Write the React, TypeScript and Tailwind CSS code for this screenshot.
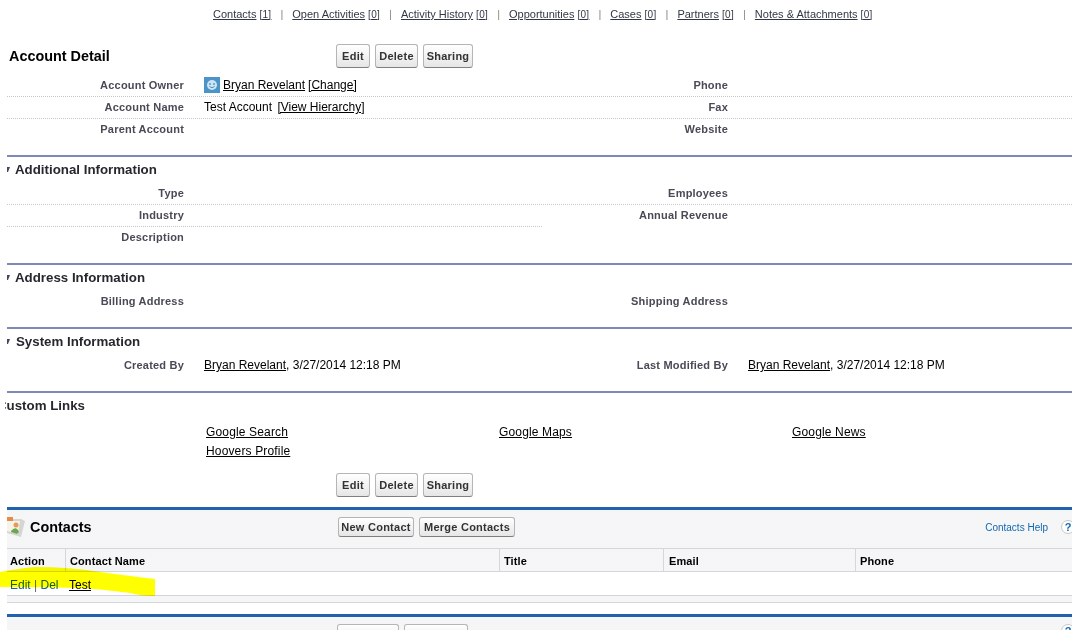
const font = { fontFamily: '"Liberation Sans", Arial, sans-serif' };

function Btn({ children, tall = true, w }: { children: string; tall?: boolean; w: string }) {
  return (
    <button
      className={`${w} ${tall ? 'h-6' : 'h-5'} rounded-[3px] border border-[#b5b5b5] border-b-[#7f7f7f] bg-gradient-to-b from-[#ffffff] to-[#e6e6e6] text-center text-[11px] leading-none font-bold tracking-[0.25px] whitespace-nowrap text-[#333333]`}
    >
      {children}
    </button>
  );
}

function Triangle() {
  return (
    <svg width="3" height="6" viewBox="0 0 3 6" className="shrink-0">
      <path d="M0 0H3L1 5H0Z" fill="#44465a" />
    </svg>
  );
}

const labelCls = 'text-right text-[11px] font-bold tracking-[0.2px] whitespace-nowrap text-[#4a4a56]';
const valueCls = 'ml-5 text-xs whitespace-nowrap text-black';

function Row({ l, v, r, rv, line = true, half = false }: { l?: string; v?: React.ReactNode; r?: string; rv?: React.ReactNode; line?: boolean; half?: boolean }) {
  return (
    <div className="relative flex h-[22px] items-center">
      <div className={`w-[177px] ${labelCls}`}>{l}</div>
      <div className={`w-[340px] ${valueCls}`}>{v}</div>
      <div className={`w-[184px] ${labelCls}`}>{r}</div>
      <div className={valueCls}>{rv}</div>
      {line && <div className="absolute -bottom-px left-0 w-full border-b border-dotted border-[#c4c8cc]" />}
      {half && <div className="absolute -bottom-px left-0 w-[535px] border-b border-dotted border-[#c4c8cc]" />}
    </div>
  );
}

function SectionHead({ title, tri = true, shift = false }: { title: string; tri?: boolean; shift?: boolean }) {
  return (
    <div className="flex h-[27px] items-center gap-[5px] border-t-2 border-[#7f89b4] pt-[1px]">
      {tri && <Triangle />}
      <h3
        className={`text-[13.3px] font-bold whitespace-nowrap text-[#27282e] ${tri ? '' : '-ml-[10px] [clip-path:inset(0_0_0_8px)]'} ${shift ? 'ml-px' : ''}`}
      >
        {title}
      </h3>
    </div>
  );
}

const A = ({ children }: { children: string }) => <a className="text-black underline">{children}</a>;

const tabs = [
  ['Contacts', '[1]'],
  ['Open Activities', '[0]'],
  ['Activity History', '[0]'],
  ['Opportunities', '[0]'],
  ['Cases', '[0]'],
  ['Partners', '[0]'],
  ['Notes & Attachments', '[0]'],
];

const dither = 'bg-[repeating-conic-gradient(#f8f5f8_0_25%,#f2f6f5_0_50%)] bg-[length:2px_2px]';

export default function App() {
  return (
    <div style={font} className="relative h-[630px] w-[1072px] overflow-hidden bg-white pl-[7px]">
      <nav className="flex h-[44px] items-start pt-[6px] pl-[206px] text-[11px] text-[#333645]">
        {tabs.map(([t, c], i) => (
          <span key={t} className="flex items-center whitespace-nowrap">
            {i > 0 && <span className="mx-[9px] text-[#8b8b7c]">|</span>}
            <a className="underline">{t}</a>
            <span className="ml-[3px] text-[10px] tracking-[0.3px] underline">{c}</span>
          </span>
        ))}
      </nav>

      <div className="flex h-[30px] items-start">
        <h2 className="mt-[2px] w-[329px] pl-[2px] text-[14.4px] font-bold text-black">Account Detail</h2>
        <div className="flex gap-[5px]">
          <Btn w="w-[34px]">Edit</Btn>
          <Btn w="w-[43px]">Delete</Btn>
          <Btn w="w-[50px]">Sharing</Btn>
        </div>
      </div>

      <Row
        l="Account Owner"
        r="Phone"
        v={
          <span className="flex items-center gap-[3px]">
            <svg width="16" height="16" viewBox="0 0 16 16" className="shrink-0">
              <rect width="16" height="16" fill="#4a94c8" />
              <circle cx="8" cy="8" r="5" fill="#cfe4f2" />
              <circle cx="6" cy="7" r="0.9" fill="#4a94c8" />
              <circle cx="10" cy="7" r="0.9" fill="#4a94c8" />
              <path d="M5.5 9.5Q8 12 10.5 9.5" stroke="#4a94c8" fill="none" />
            </svg>
            <A>Bryan Revelant</A>
            <A>[Change]</A>
          </span>
        }
      />
      <Row l="Account Name" r="Fax" v={<span>Test Account <span className="ml-[2px]"><A>[View Hierarchy]</A></span></span>} />
      <div className="h-[37px]">
        <Row l="Parent Account" r="Website" line={false} />
      </div>

      <SectionHead title="Additional Information" />
      <Row l="Type" r="Employees" />
      <Row l="Industry" r="Annual Revenue" line={false} half />
      <div className="h-[37px]">
        <Row l="Description" line={false} />
      </div>

      <SectionHead title="Address Information" />
      <div className="h-[37px]">
        <Row l="Billing Address" r="Shipping Address" line={false} />
      </div>

      <SectionHead title="System Information" shift />
      <div className="h-[37px]">
        <Row
          l="Created By"
          r="Last Modified By"
          v={<span><A>Bryan Revelant</A>, 3/27/2014 12:18 PM</span>}
          rv={<span><A>Bryan Revelant</A>, 3/27/2014 12:18 PM</span>}
          line={false}
        />
      </div>

      <SectionHead title="Custom Links" tri={false} />
      <div className="grid grid-cols-[293px_293px_auto] pt-[5px] pl-[199px] text-xs leading-[19px] tracking-[0.15px]">
        <A>Google Search</A>
        <A>Google Maps</A>
        <A>Google News</A>
        <A>Hoovers Profile</A>
      </div>

      <div className="mt-[12px] flex h-[34px] gap-[5px] pl-[329px]">
        <Btn w="w-[34px]">Edit</Btn>
        <Btn w="w-[43px]">Delete</Btn>
        <Btn w="w-[50px]">Sharing</Btn>
      </div>

      <section className={`h-[96px] border-t-[3px] border-[#1f63b0] ${dither}`}>
        <div className="flex h-[38px] items-center pb-[4px]">
          <svg width="20" height="22" viewBox="0 0 20 22" className="shrink-0">
            <path d="M0 3H14L18 5L14 21L0 17Z" fill="#d6d6d0" />
            <path d="M0 5H13L11 18L0 15Z" fill="#f5f3ea" />
            <rect x="0" y="1" width="6" height="4" fill="#ea8a48" />
            <circle cx="9" cy="9" r="2.5" fill="#e9995a" />
            <path d="M4 15Q9 9 12 16L10 18L4 16Z" fill="#6aa84f" />
          </svg>
          <h2 className="mt-[2px] ml-[3px] w-[308px] text-[14.4px] font-bold text-black">Contacts</h2>
          <div className="flex gap-[5px]">
            <Btn tall={false} w="w-[76px]">New Contact</Btn>
            <Btn tall={false} w="w-[96px]">Merge Contacts</Btn>
          </div>
          <a className="ml-auto text-[10px] text-[#1468b0]">Contacts Help</a>
          <span className="mr-[-3px] ml-[13px] flex size-[14px] items-center justify-center rounded-full border border-[#c8c8c8] bg-white text-[11px] font-bold text-[#1468b0]">?</span>
        </div>

        <div className="flex h-[24px] items-center border-y border-[#d4d6d8] text-[11px] font-bold tracking-[0.1px] text-black">
          <div className="flex h-full w-[58px] items-center pt-[2px] pl-[3px]">Action</div>
          <div className="flex h-full w-[434px] items-center border-l border-[#d4d6d8] pt-[2px] pl-[4px]">Contact Name</div>
          <div className="flex h-full w-[164px] items-center border-l border-[#d4d6d8] pt-[2px] pl-[4px]">Title</div>
          <div className="flex h-full w-[192px] items-center border-l border-[#d4d6d8] pt-[2px] pl-[5px]">Email</div>
          <div className="flex h-full flex-1 items-center border-l border-[#d4d6d8] pt-[2px] pl-[4px]">Phone</div>
        </div>

        <div className="flex h-[24px] items-center border-b border-[#d4d2e0] bg-white pt-[2px] text-xs">
          <div className="w-[58px] pl-[3px] whitespace-nowrap text-[#1b5fa8]">Edit <span className="text-[#666]">|</span> Del</div>
          <div className="pl-[4px]"><A>Test</A></div>
        </div>
        <div className="h-[7px] border-b border-[#d4d6d8]" />
      </section>

      <section className={`mt-[11px] h-[30px] border-t-[3px] border-[#1f63b0] ${dither}`}>
        <div className="flex h-[38px] items-start">
          <h2 className="mt-[9px] w-[330px] text-[14.4px] font-bold whitespace-nowrap text-black">Open Activities</h2>
          <div className="mt-[7px] flex gap-[5px]">
            <Btn tall={false} w="w-[62px]">New Task</Btn>
            <Btn tall={false} w="w-[64px]">New Event</Btn>
          </div>
          <span className="mt-[7px] mr-[-3px] ml-auto flex size-[14px] items-center justify-center rounded-full border border-[#c8c8c8] bg-white text-[11px] font-bold text-[#1468b0]">?</span>
        </div>
      </section>

      <svg width="160" height="40" viewBox="0 0 160 40" className="pointer-events-none absolute top-[566px] left-0 mix-blend-multiply">
        <path d="M0 6Q15 3 35 1Q70 1 100 6Q130 10 155 13V30Q140 30 130 27Q100 23 80 22Q40 21 0 21Z" fill="#ffff00" />
      </svg>
    </div>
  );
}
